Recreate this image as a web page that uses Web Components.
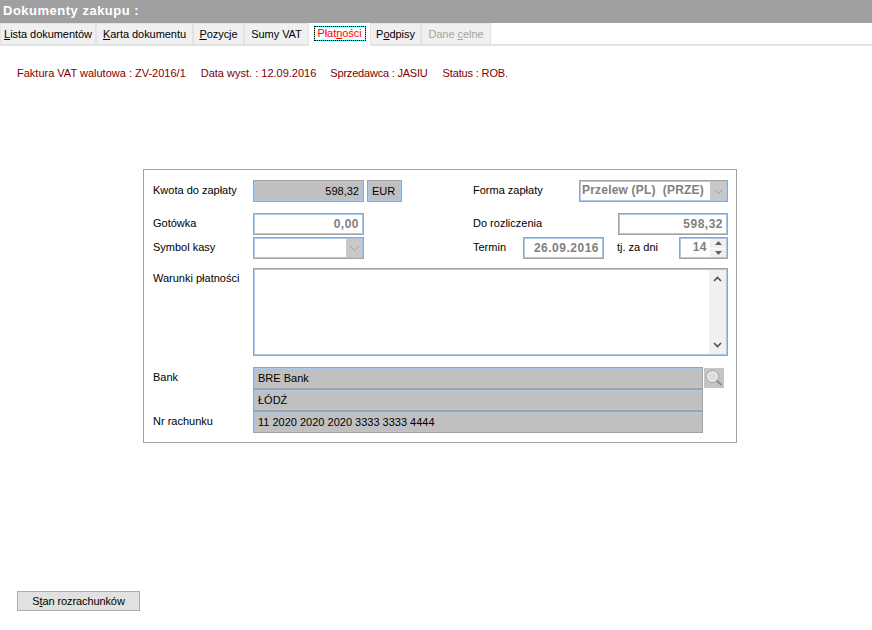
<!DOCTYPE html>
<html lang="pl">
<head>
<meta charset="utf-8">
<title>Dokumenty zakupu</title>
<style>
  html, body { margin: 0; padding: 0; background: #fff; height: 630px; overflow: hidden; }
  body { font: 11px "Liberation Sans", Arial, sans-serif; color: #000; }
  #app { display: flex; flex-direction: column; height: 630px; }
</style>
</head>
<body>
<div id="app">
  <title-bar>Dokumenty zakupu :</title-bar>
  <tab-bar>
    <tab-item w="96"><u>L</u>ista dokumentów</tab-item>
    <tab-item w="97"><u>K</u>arta dokumentu</tab-item>
    <tab-item w="51"><u>P</u>ozycje</tab-item>
    <tab-item w="65">Sumy VAT</tab-item>
    <tab-item w="61" active>Płat<u>n</u>ości</tab-item>
    <tab-item w="51">P<u>o</u>dpisy</tab-item>
    <tab-item w="70" disabled>Dane <u>c</u>elne</tab-item>
  </tab-bar>
  <doc-info>
    <span>Faktura VAT walutowa : ZV-2016/1</span>
    <span>Data wyst. : 12.09.2016</span>
    <span style="letter-spacing:-.2px;margin-left:-1px">Sprzedawca : JASIU</span>
    <span style="letter-spacing:-.15px">Status : ROB.</span>
  </doc-info>
  <pay-panel></pay-panel>
  <foot-bar><flat-button><span>S<u>t</u>an rozrachunków</span></flat-button></foot-bar>
</div>

<script>
// Pasek tytulu
class TitleBar extends HTMLElement {
  constructor() {
    super();
    this.attachShadow({ mode: 'open' });
    this.shadowRoot.innerHTML = `
      <style>
        :host { display: block; height: 23px; background: #a0a0a0; color: #fff;
          font: bold 13px/21px "Liberation Sans", Arial, sans-serif; letter-spacing: .5px; padding-left: 3px; }
      </style>
      <slot></slot>`;
  }
}

class TabBar extends HTMLElement {
  constructor() {
    super();
    this.attachShadow({ mode: 'open' });
    this.shadowRoot.innerHTML = `
      <style>
        :host { display: flex; box-sizing: border-box; height: 23px; background: #fff; border-bottom: 2px solid #e3e3e3; }
      </style>
      <slot></slot>`;
  }
}

class TabItem extends HTMLElement {
  constructor() {
    super();
    this.attachShadow({ mode: 'open' });
    this.shadowRoot.innerHTML = `
      <style>
        :host { display: flex; box-sizing: border-box; height: 21px; justify-content: center; align-items: center;
          background: #f0f0f0; border: 1px solid #e3e3e3; border-bottom: 0;
          font: 11px "Liberation Sans", Arial, sans-serif; letter-spacing: -.05px; color: #000; white-space: nowrap; }
        :host([active]) { background: #fff; color: #f00; border-color: #fff; height: 23px; padding-bottom: 4px; z-index: 1; }
        :host([active]) span { box-sizing: border-box; width: 52px; height: 15px; line-height: 13px; text-align: center;
          border: 1px solid #20d0d8; outline: 1px dotted #000; outline-offset: -1px; }
        :host([disabled]) { color: #a3a3a3; }
      </style>
      <span><slot></slot></span>`;
  }
  connectedCallback() {
    this.style.width = this.getAttribute('w') + 'px';
  }
}

// Naglowek dokumentu
class DocInfo extends HTMLElement {
  constructor() {
    super();
    this.attachShadow({ mode: 'open' });
    this.shadowRoot.innerHTML = `
      <style>
        :host { display: flex; gap: 15px; height: 123px; box-sizing: border-box; padding: 20px 0 0 17px;
          color: #800000; font: 11px/14px "Liberation Sans", Arial, sans-serif; white-space: nowrap; }
      </style>
      <slot></slot>`;
  }
}

// Pole tekstowe
class UiField extends HTMLElement {
  constructor() {
    super();
    this.attachShadow({ mode: 'open' });
    this.shadowRoot.innerHTML = `
      <style>
        :host { display: flex; box-sizing: border-box; height: 22px; align-items: center; background: #fff;
          border: 1px solid #a3a3a3; box-shadow: inset 0 0 0 1px #a9c8ea;
          padding: 0 4px 1px 4px; font: 11px "Liberation Sans", Arial, sans-serif; white-space: nowrap; color: #000; overflow: hidden; }
        :host([right]) { justify-content: flex-end; }
        :host([ro]) { background: #c0c0c0; }
        :host([muted]) { color: #808080; font: bold 12px "Liberation Sans", Arial, sans-serif; letter-spacing: .5px; }
      </style>
      <slot></slot>`;
  }
}

// Lista rozwijana
class UiCombo extends HTMLElement {
  constructor() {
    super();
    this.attachShadow({ mode: 'open' });
    this.shadowRoot.innerHTML = `
      <style>
        :host { display: flex; box-sizing: border-box; height: 22px; align-items: stretch; background: #fff;
          border: 1px solid #a3a3a3; box-shadow: inset 0 0 0 1px #a9c8ea; padding: 1px; color: #808080;
          font: bold 12px "Liberation Sans", Arial, sans-serif; letter-spacing: .2px; white-space: nowrap; }
        .val { flex: 1; padding-left: 1px; line-height: 17px; overflow: hidden; }
        .btn { width: 16px; background: #c8c8c8; display: flex; align-items: center; justify-content: center; }
      </style>
      <div class="val"><slot></slot></div>
      <div class="btn"><svg width="9" height="5" viewBox="0 0 9 5"><path d="M.5.5 4.5 4.5 8.5.5" fill="none" stroke="#a0a0a0"/></svg></div>`;
  }
}

// Pole liczbowe ze strzalkami
class UiSpin extends HTMLElement {
  constructor() {
    super();
    this.attachShadow({ mode: 'open' });
    this.shadowRoot.innerHTML = `
      <style>
        :host { display: flex; box-sizing: border-box; height: 22px; background: #fff;
          border: 1px solid #a3a3a3; box-shadow: inset 0 0 0 1px #a9c8ea; padding: 1px; color: #808080;
          font: bold 12px "Liberation Sans", Arial, sans-serif; letter-spacing: .5px; }
        .val { flex: 1; text-align: right; line-height: 17px; padding-right: 3px; }
        .arrows { width: 16px; display: flex; flex-direction: column; gap: 1px; background: #fff; }
        .arrows div { flex: 1; background: #f0f0f0; display: flex; align-items: center; justify-content: center; }
      </style>
      <div class="val"><slot></slot></div>
      <div class="arrows">
        <div><svg width="7" height="4" viewBox="0 0 7 4"><path d="M3.5 0 7 4H0Z" fill="#606060"/></svg></div>
        <div><svg width="7" height="4" viewBox="0 0 7 4"><path d="M0 0H7L3.5 4Z" fill="#606060"/></svg></div>
      </div>`;
  }
}

// Pole wieloliniowe z paskiem przewijania
class UiMemo extends HTMLElement {
  constructor() {
    super();
    this.attachShadow({ mode: 'open' });
    this.shadowRoot.innerHTML = `
      <style>
        :host { display: flex; box-sizing: border-box; height: 88px; background: #fff;
          border: 1px solid #a3a3a3; box-shadow: inset 0 0 0 1px #a9c8ea; padding: 1px; justify-content: flex-end; }
        .bar { width: 17px; background: #f0f0f0; display: flex; flex-direction: column; justify-content: space-between; align-items: center; padding: 6px 0; box-sizing: border-box; }
      </style>
      <div class="bar">
        <svg width="9" height="6" viewBox="0 0 9 6"><path d="M1 5 4.5 1.5 8 5" fill="none" stroke="#505050" stroke-width="1.6"/></svg>
        <svg width="9" height="6" viewBox="0 0 9 6"><path d="M1 1 4.5 4.5 8 1" fill="none" stroke="#505050" stroke-width="1.6"/></svg>
      </div>`;
  }
}

class SearchButton extends HTMLElement {
  constructor() {
    super();
    this.attachShadow({ mode: 'open' });
    this.shadowRoot.innerHTML = `
      <style>
        :host { display: flex; width: 20px; height: 20px; background: #c4c4c4; align-items: center; justify-content: center; }
      </style>
      <svg width="18" height="18" viewBox="0 0 18 18">
        <circle cx="7.5" cy="7.5" r="5" fill="#dcdcdc" stroke="#f4f4f4" stroke-width="1.2"/>
        <circle cx="7.5" cy="7.5" r="6" fill="none" stroke="#9a9a9a" stroke-width=".8"/>
        <path d="M11.5 11.5 16.5 16" stroke="#8c8c8c" stroke-width="2"/>
      </svg>`;
  }
}

class FlatButton extends HTMLElement {
  constructor() {
    super();
    this.attachShadow({ mode: 'open' });
    this.shadowRoot.innerHTML = `
      <style>
        :host { display: flex; box-sizing: border-box; width: 123px; height: 20px; background: #e1e1e1; border: 1px solid #adadad;
          align-items: center; justify-content: center; font: 11px "Liberation Sans", Arial, sans-serif; letter-spacing: -.1px; color: #000; }
      </style>
      <slot></slot>`;
  }
}

// Panel platnosci
class PayPanel extends HTMLElement {
  constructor() {
    super();
    this.attachShadow({ mode: 'open' });
    this.shadowRoot.innerHTML = `
      <style>
        :host { display: block; box-sizing: border-box; width: 594px; height: 274px; margin-left: 143px;
          border: 1px solid #a0a0a0; padding: 10px 8px 0 9px; font: 11px "Liberation Sans", Arial, sans-serif; color: #000; }
        .row { display: flex; height: 22px; align-items: center; white-space: nowrap; }
        .lab { width: 100px; flex: none; line-height: 14px; padding-bottom: 3px; box-sizing: border-box; }
        .fld { width: 111px; flex: none; }
        .left { width: 320px; flex: none; display: flex; align-items: center; }
        .up { padding-bottom: 3px; }
        .r { margin-left: auto; }
        .top { align-items: flex-start; }
        .stack { display: flex; flex-direction: column; }
        .wide { width: 450px; }
      </style>
      <div class="row" style="margin-bottom:11px">
        <div class="left"><span class="lab">Kwota do zapłaty</span>
          <ui-field class="fld" right ro>598,32</ui-field>
          <ui-field ro style="width:35px;margin-left:3px;flex:none">EUR</ui-field></div>
        <span class="up">Forma zapłaty</span>
        <ui-combo class="r" style="width:149px">Przelew (PL)&nbsp; (PRZE)</ui-combo>
      </div>
      <div class="row" style="margin-bottom:2px">
        <div class="left"><span class="lab">Gotówka</span>
          <ui-field class="fld" right muted>0,00</ui-field></div>
        <span class="up">Do rozliczenia</span>
        <ui-field class="r" right muted style="width:110px">598,32</ui-field>
      </div>
      <div class="row" style="margin-bottom:9px">
        <div class="left"><span class="lab">Symbol kasy</span>
          <ui-combo class="fld"></ui-combo></div>
        <span class="up" style="width:50px">Termin</span>
        <ui-field right muted style="width:81px">26.09.2016</ui-field>
        <span class="up" style="margin-left:13px">tj. za dni</span>
        <ui-spin class="r" style="width:49px">14</ui-spin>
      </div>
      <div class="row top" style="height:88px;margin-bottom:11px">
        <span class="lab" style="padding-top:3px">Warunki płatności</span>
        <ui-memo style="width:475px"></ui-memo>
      </div>
      <div class="row top" style="height:66px">
        <div class="stack lab" style="padding:0;height:66px;justify-content:space-between;">
          <span style="line-height:20px">Bank</span>
          <span style="line-height:20px;padding-bottom:2px">Nr rachunku</span>
        </div>
        <div class="stack wide">
          <ui-field ro>BRE Bank</ui-field>
          <ui-field ro>ŁÓDŹ</ui-field>
          <ui-field ro>11 2020 2020 2020 3333 3333 4444</ui-field>
        </div>
        <search-button style="margin:1px 0 0 1px"></search-button>
      </div>`;
  }
}

class FootBar extends HTMLElement {
  constructor() {
    super();
    this.attachShadow({ mode: 'open' });
    this.shadowRoot.innerHTML = `
      <style>
        :host { display: block; margin-top: 148px; padding-left: 17px; }
      </style>
      <slot></slot>`;
  }
}

customElements.define('title-bar', TitleBar);
customElements.define('tab-bar', TabBar);
customElements.define('tab-item', TabItem);
customElements.define('doc-info', DocInfo);
customElements.define('ui-field', UiField);
customElements.define('ui-combo', UiCombo);
customElements.define('ui-spin', UiSpin);
customElements.define('ui-memo', UiMemo);
customElements.define('search-button', SearchButton);
customElements.define('flat-button', FlatButton);
customElements.define('pay-panel', PayPanel);
customElements.define('foot-bar', FootBar);
</script>
</body>
</html>
